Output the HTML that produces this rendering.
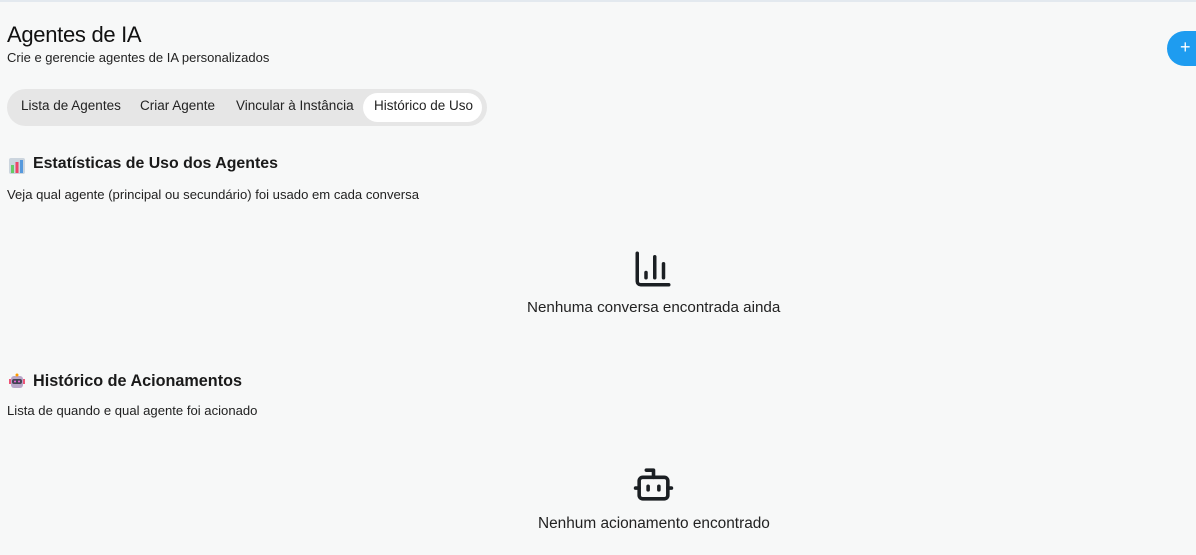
<!DOCTYPE html>
<html><head><meta charset="utf-8"><style>
*{margin:0;padding:0;box-sizing:border-box}
body{width:1196px;height:555px;overflow:hidden;background:#f7f8f8;font-family:"Liberation Sans","DejaVu Sans",sans-serif;color:#111;position:relative;border-top:2px solid #e3e9ef}
.abs{position:absolute;white-space:nowrap}
h1{font-size:22px;font-weight:400;letter-spacing:-0.3px}
.tabs{position:absolute;left:7px;top:87px;width:480px;height:37px;background:#e6e6e6;border-radius:19px}
.tab{position:absolute;top:9px;font-size:13.5px;color:#222}
.act{position:absolute;left:356px;top:4px;width:119px;height:29px;background:#fff;border-radius:15px}
.h2{font-size:16.2px;font-weight:bold;color:#1a1a1a}
.p{font-size:13.1px;color:#222}
.btn{position:absolute;left:1167px;top:29px;width:60px;height:35px;background:#1e9cf0;border-radius:18px;color:#fff;font-size:18px;line-height:33px;padding-left:13px}
</style></head><body>
<h1 class="abs" style="left:7px;top:20px">Agentes de IA</h1>
<div class="abs p" style="left:7px;top:48px;font-size:13px">Crie e gerencie agentes de IA personalizados</div>
<div class="btn">+</div>
<div class="tabs"><div class="act"></div>
<span class="tab abs" style="left:14px">Lista de Agentes</span>
<span class="tab abs" style="left:133px">Criar Agente</span>
<span class="tab abs" style="left:229px">Vincular à Instância</span>
<span class="tab abs" style="left:367px">Histórico de Uso</span>
</div>
<svg class="abs" style="left:8px;top:155px" width="18" height="18" viewBox="0 0 18 18"><rect x="1" y="1" width="16" height="16" rx="2" fill="#ccd5de"/><rect x="3" y="8" width="3" height="8" fill="#6c6"/><rect x="7.5" y="5" width="3" height="11" fill="#e46"/><rect x="12" y="3" width="3" height="13" fill="#59d"/></svg>
<div class="abs h2" style="left:33px;top:153px;font-size:15.9px">Estatísticas de Uso dos Agentes</div>
<div class="abs p" style="left:7px;top:185px">Veja qual agente (principal ou secundário) foi usado em cada conversa</div>
<svg class="abs" style="left:632px;top:246px" width="42" height="42" viewBox="0 0 24 24" fill="none" stroke="#1b1f23" stroke-width="2" stroke-linecap="round" stroke-linejoin="round"><path d="M3 3v16a2 2 0 0 0 2 2h16"/><path d="M18 17V9"/><path d="M13 17V5"/><path d="M8 17v-3"/></svg>
<div class="abs" style="left:527px;top:297px;font-size:15.2px;color:#222">Nenhuma conversa encontrada ainda</div>
<svg class="abs" style="left:8px;top:371px" width="18" height="18" viewBox="0 0 18 18"><rect x="3" y="3" width="12" height="12" rx="3" fill="#b9a6c8"/><rect x="4" y="6" width="10" height="5" rx="2" fill="#445"/><circle cx="7" cy="8.5" r="1" fill="#e6d"/><circle cx="11" cy="8.5" r="1" fill="#e6d"/><rect x="1" y="6" width="2" height="5" fill="#e57"/><rect x="15" y="6" width="2" height="5" fill="#e57"/><circle cx="9" cy="2" r="1.5" fill="#f90"/></svg>
<div class="abs h2" style="left:33px;top:370px">Histórico de Acionamentos</div>
<div class="abs p" style="left:7px;top:401px">Lista de quando e qual agente foi acionado</div>
<svg class="abs" style="left:632px;top:461px" width="43" height="43" viewBox="0 0 24 24" fill="none" stroke="#1b1f23" stroke-width="2" stroke-linecap="round" stroke-linejoin="round"><path d="M12 8V4H8"/><rect width="16" height="12" x="4" y="8" rx="2"/><path d="M2 14h2"/><path d="M20 14h2"/><path d="M15 13v2"/><path d="M9 13v2"/></svg>
<div class="abs" style="left:538px;top:513px;font-size:15.4px;color:#222">Nenhum acionamento encontrado</div>
</body></html>
